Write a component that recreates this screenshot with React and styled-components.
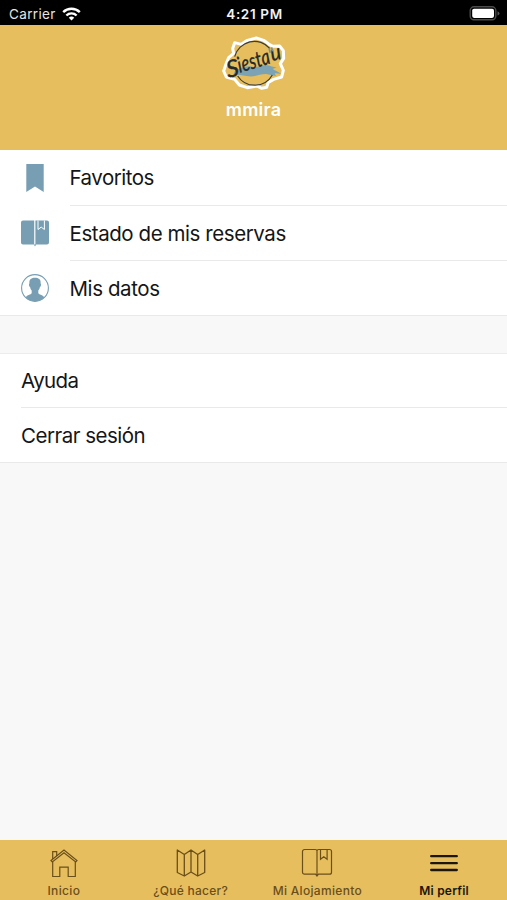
import React, {useState} from 'react';
import styled, {createGlobalStyle} from 'styled-components'

const GlobalStyle = createGlobalStyle`
  * {
    box-sizing: border-box;
  }

  body {
    margin: 0;
    background-color: #f8f8f8;
    font-family: Inter, "Liberation Sans", sans-serif;
  }
`

const Screen = styled.div`
  display: flex;
  flex-direction: column;
  height: 100vh;
  overflow: hidden;
`

const StatusBar = styled.header`
  display: grid;
  grid-template-columns: 1fr auto 1fr;
  align-items: center;
  height: 25px;
  padding: 2px 7px 0 9px;
  color: #e4e4e4;
  background-color: #000;
  font-size: 13.5px;

  .carrier {
    display: flex;
    align-items: center;
    gap: 6px;
    letter-spacing: 0.35px;
  }

  .time {
    color: #f2f2f2;
    font-weight: 600;
    letter-spacing: 0.65px;
  }

  .battery {
    justify-self: end;
  }

  svg {
    display: block;
  }
`

const ProfileHeader = styled.section`
  display: flex;
  flex-direction: column;
  align-items: center;
  height: 125px;
  padding-top: 9px;
  background-color: #e6be5e;

  svg {
    display: block;
  }
`

const UserName = styled.div`
  margin-top: 5px;
  color: #fff;
  font-size: 18px;
  font-weight: 600;
  line-height: 25px;
  letter-spacing: 0.2px;
`

const MenuList = styled.ul`
  margin: 0 0 ${props => props.$gap || '0'};
  padding: 0;
  list-style: none;
  background-color: #fff;
  border-top: ${props => props.$topLine ? '1px solid #ececec' : 'none'};
  border-bottom: 1px solid #e9e9e9;
`

const MenuItem = styled.li`
  display: flex;
  height: ${props => props.$height};
  padding-left: 21px;
  cursor: pointer;
`

const MenuIcon = styled.span`
  display: flex;
  align-items: center;
  width: 48.5px;
`

const MenuLabel = styled.span`
  display: flex;
  flex: 1;
  align-items: center;
  color: #151515;
  font-size: 20.5px;
  letter-spacing: ${props => props.$spacing};
  border-bottom: ${props => props.$last ? 'none' : '1px solid #e9e9e9'};
`

const TabBar = styled.nav`
  display: grid;
  grid-template-columns: repeat(4, 1fr);
  height: 60px;
  margin-top: auto;
  background-color: #e6be5e;
`

const Tab = styled.button`
  all: unset;
  display: flex;
  flex-direction: column;
  align-items: center;
  padding: 8px 0 0 1px;
  color: ${props => props.$active ? '#1c1608' : '#6b4f1a'};
  cursor: pointer;

  span {
    margin-top: 5px;
    font-size: 12px;
    font-weight: ${props => props.$active ? 600 : 500};
    line-height: 16px;
    letter-spacing: ${props => props.$spacing};
    white-space: nowrap;
  }

  svg {
    display: block;
  }
`

const WifiIcon = () => (
    <svg width="19" height="14" viewBox="0 0 19 14" fill="none" stroke="#fff" strokeWidth="2.4">
        <path d="M1.2 5.1C5.8.6 13.2.6 17.8 5.1"/>
        <path d="M4.4 8.5c2.8-2.8 7.4-2.8 10.2 0"/>
        <path d="M6.8 10.8c1.5-1.6 3.9-1.6 5.4 0L9.5 13.6z" fill="#fff" stroke="none"/>
    </svg>
);

const BatteryIcon = () => (
    <svg width="31" height="15" viewBox="0 0 31 15">
        <rect x="1.2" y=".8" width="25.6" height="13" rx="3.8" fill="none" stroke="#4b4b4b" strokeWidth="1.4"/>
        <rect x="3.2" y="2.7" width="21.8" height="9.2" rx="1.8" fill="#fff"/>
        <path d="M28.5 5.2q2 .9 2 2.2t-2 2.2z" fill="#555"/>
    </svg>
);

const Logo = () => (
    <svg width="64" height="58" viewBox="0 0 192 174">
        <path
            d="M38 26l20 5 18-12 27-7 22 7 18 13 10 5 20-1 11 14 1 23-10 16 9 20-5 20-24 7-16 9-5 15-15 3-14-7-29 5-24-8-14-17-25-7-8-18 8-23 7-17 15-13-3-14z"
            fill="#e6be5e" stroke="#fff" strokeWidth="9" strokeLinejoin="round"/>
        <path d="M39 110c14-8 30-12 44-14 20 8 36-4 52-2 12 2 18 6 29 6l-12 5 26 14-20-1 4 8-30-6c-22 0-34 11-58 6-18-2-26-5-40-4z" fill="#7ba3b3"/>
        <path d="M38 68a61 61 0 0 1 106-24M47 126a61 61 0 0 0 104-3" fill="none" stroke="#3b3d37" strokeWidth="3.6"/>
        <g fill="#252b2b" stroke="#252b2b" strokeWidth=".5" fontFamily="Lato, sans-serif" fontStyle="italic" fontWeight="500">
            <text transform="translate(18 132) rotate(-12)" fontSize="72" textLength="38" lengthAdjust="spacingAndGlyphs">S</text>
            <text transform="translate(53 117) rotate(-17)" fontSize="67" textLength="100" lengthAdjust="spacingAndGlyphs">iesta</text>
            <text transform="translate(150 82) rotate(-14)" fontSize="66" textLength="32" lengthAdjust="spacingAndGlyphs">u</text>
        </g>
        <path d="M141 43l4 13M149 40l2 12" fill="none" stroke="#6f94a0" strokeWidth="5"/>
    </svg>
);

const BookmarkIcon = () => (
    <svg width="28" height="28" viewBox="0 0 28 28">
        <path d="M5.3 0h17.4v28L14 22.6 5.3 28z" fill="#779eb3"/>
    </svg>
);

const ReservationIcon = () => (
    <svg width="28" height="28" viewBox="0 0 28 28">
        <path d="M2 .5h11.200v24H2a2 2 0 0 1-2-2v-20a2 2 0 0 1 2-2zM14.400 .5H26a2 2 0 0 1 2 2v20a2 2 0 0 1-2 2H15.200l-1.200 2-1.200-2h1.600z" fill="#779eb3"/>
        <path d="M17 .5v9l3.200-2.400 3.200 2.400v-9" fill="none" stroke="#fff" strokeWidth="1"/>
    </svg>
);

const UserIcon = () => (
    <svg width="28" height="28" viewBox="0 0 28 28">
        <circle cx="14" cy="14" r="13.4" fill="#fff" stroke="#779eb3" strokeWidth="1.100"/>
        <path d="M4.800 23.500c1-2.800 5.200-2.500 5.900-4.500v-2.500c-.9-1-1.400-2-1.600-3.500-1.200-.5-1.500-3-.6-3.700C7.800 6 10 3.800 14 3.800s6.200 2.200 5.500 5.500c.9.700.6 3.200-.6 3.700-.2 1.500-.7 2.500-1.600 3.500V19c.7 2 4.900 1.700 5.900 4.500-4.500 5-13.900 5-18.400 0z" fill="#779eb3"/>
    </svg>
);

const HomeIcon = () => (
    <svg width="28" height="30" viewBox="0 0 28 30" fill="none" stroke="currentColor" strokeWidth="1.200">
        <path d="M1 12.500L14 2l13 10.500-1.300 1.500L14 4.700 2.300 14z"/>
        <path d="M2.700 11V3.700h4v4.200M2.700 14v14.500h7.100v-9.300h8.400v9.300h7.100V14"/>
    </svg>
);

const MapIcon = () => (
    <svg width="30" height="30" viewBox="0 0 30 30" fill="none" stroke="currentColor" strokeWidth="1.300" strokeLinejoin="round">
        <path d="M1.300 2l7 4.500L15 2l6.700 4.500 7-4.500v22.500l-7 3.500-6.700-4-6.700 4-7-3.500zM8.300 6.500V28M15 2v22M21.700 6.500V28"/>
    </svg>
);

const BookIcon = () => (
    <svg width="32" height="30" viewBox="0 0 32 30" fill="none" stroke="currentColor" strokeWidth="1.200">
        <path d="M3.500 1.500h10.700q1.800 0 1.800 1.500 0-1.500 1.800-1.500h10.700a2 2 0 0 1 2 2v20.700a2 2 0 0 1-2 2H17.500L16 28l-1.500-1.800h-11a2 2 0 0 1-2-2V3.500a2 2 0 0 1 2-2zM16 3v25M19.500 1.500v9.700l3.300-2.500 3.300 2.500V1.500"/>
    </svg>
);

const MenuLinesIcon = () => (
    <svg width="28" height="30" viewBox="0 0 28 30" fill="none" stroke="currentColor" strokeWidth="2.300" strokeLinecap="round">
        <path d="M1.200 8.200h25.600M1.200 15.200h25.600M1.200 22h25.600"/>
    </svg>
);

const accountItems = [
    {label: 'Favoritos', icon: BookmarkIcon, height: '56px', spacing: '-0.5px'},
    {label: 'Estado de mis reservas', icon: ReservationIcon, height: '55px', spacing: '-0.43px'},
    {label: 'Mis datos', icon: UserIcon, height: '54px', spacing: '-0.4px'},
];

const tabs = [
    {label: 'Inicio', icon: HomeIcon, spacing: '0.35px'},
    {label: '¿Qué hacer?', icon: MapIcon, spacing: '0.25px'},
    {label: 'Mi Alojamiento', icon: BookIcon, spacing: '0.32px'},
    {label: 'Mi perfil', icon: MenuLinesIcon, spacing: '0.2px'},
];

const App = () => {
    const [activeTab, setActiveTab] = useState('Mi perfil');

    return (
        <Screen>
            <GlobalStyle/>
            <StatusBar>
                <div className="carrier">Carrier <WifiIcon/></div>
                <div className="time">4:21 PM</div>
                <div className="battery"><BatteryIcon/></div>
            </StatusBar>
            <ProfileHeader>
                <Logo/>
                <UserName>mmira</UserName>
            </ProfileHeader>
            <MenuList $gap="37px">
                {accountItems.map(({label, icon: Icon, height, spacing}, i) => (
                    <MenuItem key={label} $height={height}>
                        <MenuIcon><Icon/></MenuIcon>
                        <MenuLabel $spacing={spacing} $last={i === accountItems.length - 1}>{label}</MenuLabel>
                    </MenuItem>
                ))}
            </MenuList>
            <MenuList $topLine>
                <MenuItem $height="54px"><MenuLabel $spacing="-0.6px">Ayuda</MenuLabel></MenuItem>
                <MenuItem $height="54px"><MenuLabel $spacing="-0.5px" $last>Cerrar sesión</MenuLabel></MenuItem>
            </MenuList>
            <TabBar>
                {tabs.map(({label, icon: Icon, spacing}) => (
                    <Tab key={label} $active={activeTab === label} $spacing={spacing}
                         onClick={() => setActiveTab(label)}>
                        <Icon/>
                        <span>{label}</span>
                    </Tab>
                ))}
            </TabBar>
        </Screen>
    );
};

export default App;
